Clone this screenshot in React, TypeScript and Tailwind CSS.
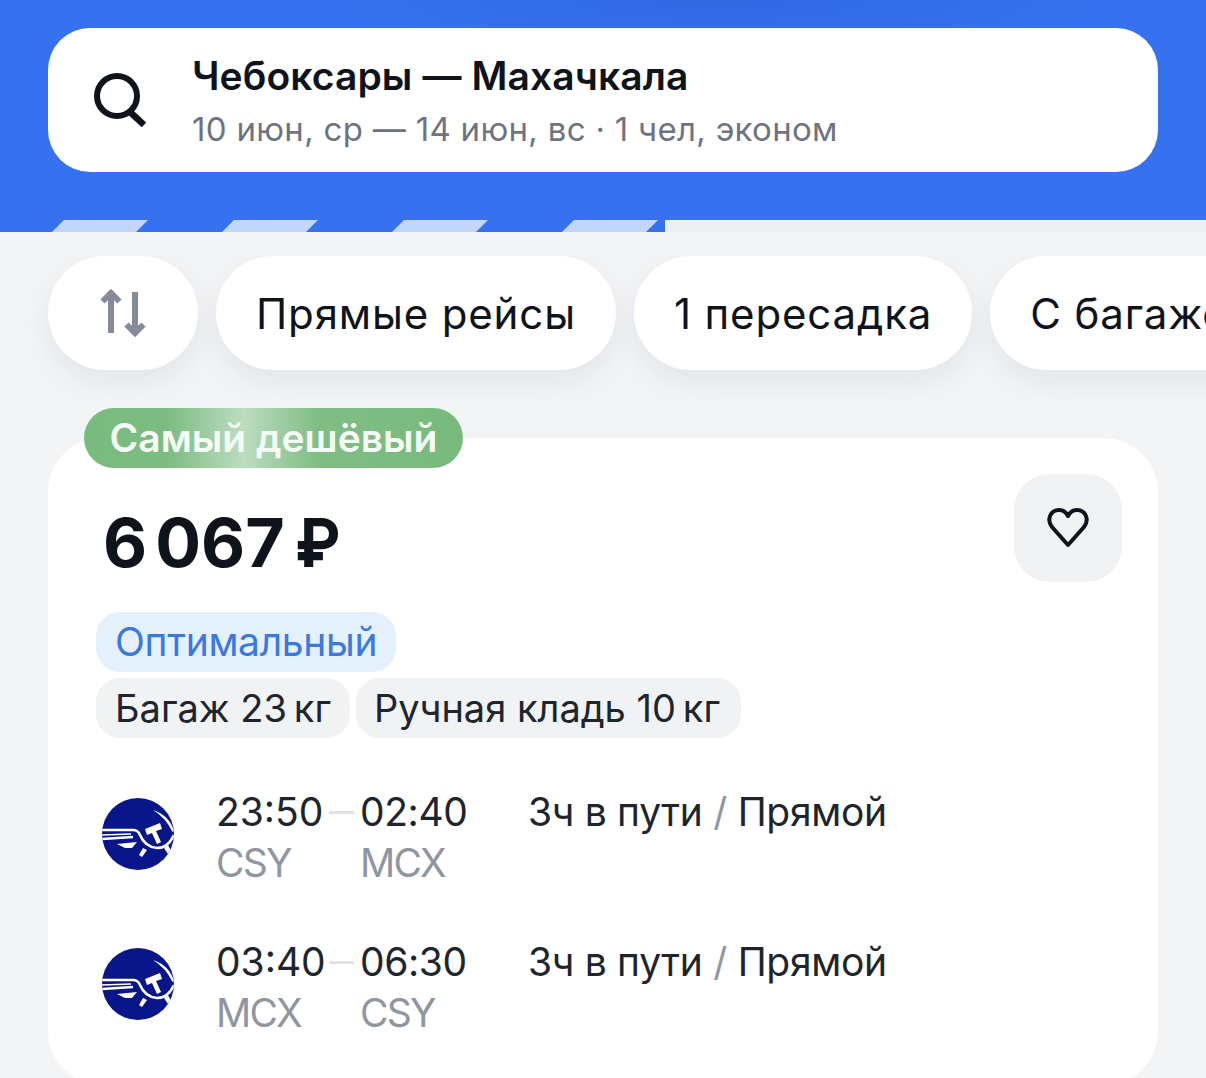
const FONT = "font-['Inter','Noto_Sans',sans-serif]";

function CarrierLogo() {
  return (
    <svg viewBox="0 0 72 72" className="w-[72px] h-[72px] shrink-0">
      <defs>
        <clipPath id="carrier-disc">
          <circle cx="36" cy="36" r="36" />
        </clipPath>
      </defs>
      <g clipPath="url(#carrier-disc)">
        <rect width="72" height="72" fill="#08168a" />
        {/* wing feathers running into the crescent */}
        <g fill="none" stroke="#fff">
          <path d="M0 32 H31 Q36 32 38 37 Q43 49 55 50 Q66 50 72 37" strokeWidth="2.6" />
          <path d="M0 37 L29 36" strokeWidth="1.5" />
          <path d="M0 41 L31 39" strokeWidth="2.4" />
        </g>
        <path d="M15 46 L35 44 L30 50 L23 50 Z" fill="#fff" />
        {/* sickle tip */}
        <path d="M51 12 Q67 17 72 33 L70.5 34 Q64 20 51 12 Z" fill="#fff" />
        {/* hammer */}
        <path d="M43 31 L58 25 L60 31 L54 33 L59 44 L55 46 L50 35 L45 37 Z" fill="#fff" />
        {/* gear teeth */}
        <path d="M41 50 L45 52 L40 59 L37 57 Z" fill="#fff" />
        <path d="M62 50 L66 47 L69 53 L66 56 Z" fill="#fff" />
      </g>
    </svg>
  );
}

function Leg({ from, to, fromCode, toCode }: { from: string; to: string; fromCode: string; toCode: string }) {
  return (
    <div className="flex items-start h-[150px]">
      <div className="w-[120px] pl-[6px] pt-[24px] shrink-0">
        <CarrierLogo />
      </div>
      <div className="w-[144px] shrink-0 pt-[13px]">
        <div className="text-[39px] leading-[50px] text-[#20252d]">{from}</div>
        <div className="mt-[1px] text-[39px] leading-[50px] tracking-[-1.8px] text-[#9096a0]">{fromCode}</div>
      </div>
      <div className="w-[168px] shrink-0 pt-[13px] relative">
        <div className="absolute left-[-31px] top-[37px] w-[25px] h-[3px] bg-[#e0e2e5]" />
        <div className="text-[39px] leading-[50px] tracking-[-0.4px] text-[#20252d]">{to}</div>
        <div className="mt-[1px] text-[39px] leading-[50px] tracking-[-1.8px] text-[#9096a0]">{toCode}</div>
      </div>
      <div className="pt-[13px] text-[39px] leading-[50px] tracking-[-0.3px] text-[#20252d] whitespace-nowrap">
        3ч в пути <span className="text-[#9096a0]">/</span> Прямой
      </div>
    </div>
  );
}

export default function App() {
  return (
    <div className={`${FONT} w-[1206px] h-[1078px] overflow-hidden bg-[#f2f4f6] text-[#0f141c]`}>
      {/* Search header */}
      <header className="h-[232px] bg-[#3672f0] bg-[radial-gradient(ellipse_420px_60px_at_720px_0px,#3068e2,#3672f000)] flex flex-col">
        <div className="mt-[28px] mx-[48px] h-[144px] rounded-[42px] bg-white flex items-center">
          <svg viewBox="0 0 54 54" className="ml-[45px] w-[54px] h-[54px] shrink-0" fill="none" stroke="#0f141c" strokeWidth="6">
            <circle cx="24" cy="23" r="20" />
            <path d="M36 38 L51 52" strokeWidth="6.5" />
          </svg>
          <div className="ml-[45px] pt-[4px]">
            <div className="text-[39px] leading-[50px] font-semibold tracking-[0.1px]">Чебоксары — Махачкала</div>
            <div className="mt-[3px] text-[33px] leading-[50px] tracking-[0.3px] text-[#6d7480]">10 июн, ср — 14 июн, вс · 1 чел, эконом</div>
          </div>
        </div>
        {/* Loading progress stripes */}
        <div className="mt-[48px] h-[12px] flex">
          <div className="w-[665px] h-full overflow-hidden flex gap-[86px] pl-[58px]">
            <div className="w-[84px] h-full bg-[#c1d6f9] -skew-x-[45deg] shrink-0" />
            <div className="w-[84px] h-full bg-[#c1d6f9] -skew-x-[45deg] shrink-0" />
            <div className="w-[84px] h-full bg-[#c1d6f9] -skew-x-[45deg] shrink-0" />
            <div className="w-[84px] h-full bg-[#c1d6f9] -skew-x-[45deg] shrink-0" />
          </div>
          <div className="flex-1 h-full bg-[#eceef2]" />
        </div>
      </header>

      {/* Quick filters */}
      <div className="mt-[24px] pl-[48px] flex gap-[18px] w-[1206px] overflow-hidden pb-[40px] -mb-[40px]">
        <div className="w-[150px] h-[114px] shrink-0 rounded-[57px] bg-white shadow-[0_12px_30px_rgba(30,40,60,0.07)] flex items-center justify-center">
          <svg viewBox="0 0 48 48" className="w-[48px] h-[48px]" fill="none" stroke="#868b9b" strokeWidth="6">
            <path d="M12 2 V44" />
            <path d="M3.5 12.5 L12 4 L20.5 12.5" />
            <path d="M36 3 V46" />
            <path d="M27.5 35.5 L36 44 L44.5 35.5" />
          </svg>
        </div>
        {["Прямые рейсы", "1 пересадка", "С багажом"].map((label) => (
          <div
            key={label}
            className="h-[114px] shrink-0 rounded-[57px] bg-white px-[40px] flex items-center text-[42px] tracking-[0.85px] shadow-[0_12px_30px_rgba(30,40,60,0.07)] whitespace-nowrap"
          >
            {label}
          </div>
        ))}
      </div>

      {/* Offer card */}
      <section className="relative mt-[68px] mx-[48px] h-[647px] rounded-[54px] bg-white px-[48px]">
        <div className="absolute left-[36px] -top-[30px] h-[60px] w-[379px] rounded-[30px] bg-[linear-gradient(90deg,#79bb7e_0%,#7cbc82_22%,#bcdcc0_42%,#7fbd84_62%,#78ba7e_100%)] flex items-center justify-center text-[39px] font-semibold text-[#f4fbf4]">
          Самый дешёвый
        </div>
        <div className="flex justify-between items-start pt-[36px]">
          <div className="pl-[7px] pt-[32px] text-[68px] leading-[72px] font-bold whitespace-nowrap flex items-baseline">
            <span className="[word-spacing:-8px]">6 067</span>
            <span className="ml-[10px] inline-block origin-left scale-x-[0.9]">₽</span>
          </div>
          <div className="-mr-[12px] w-[108px] h-[108px] rounded-[36px] bg-[#f0f2f4] flex items-center justify-center">
            <svg viewBox="0 0 42 42" className="w-[42px] h-[42px]" fill="none" stroke="#0f141c" strokeWidth="4" strokeLinejoin="round">
              <path d="M21 38 L5 20 C-1 12 4 3 12 3 C16 3 19 5 21 9 C23 5 26 3 30 3 C38 3 43 12 37 20 Z" />
            </svg>
          </div>
        </div>
        <div className="mt-[30px] flex">
          <div className="h-[60px] px-[19px] rounded-[24px] bg-[#e5f0fd] text-[#3b78e0] text-[39px] tracking-[-0.3px] flex items-center">Оптимальный</div>
        </div>
        <div className="mt-[6px] flex gap-[6px]">
          <div className="h-[60px] w-[254px] pl-[19px] rounded-[24px] bg-[#f0f2f4] text-[#20252d] text-[38px] flex items-center whitespace-nowrap">{"Багаж 23\u2009кг"}</div>
          <div className="h-[60px] w-[385px] pl-[18px] rounded-[24px] bg-[#f0f2f4] text-[#20252d] text-[38px] flex items-center whitespace-nowrap">{"Ручная кладь 10\u2009кг"}</div>
        </div>
        <div className="mt-[36px]">
          <Leg from="23:50" to="02:40" fromCode="CSY" toCode="MCX" />
          <Leg from="03:40" to="06:30" fromCode="MCX" toCode="CSY" />
        </div>
      </section>
    </div>
  );
}
